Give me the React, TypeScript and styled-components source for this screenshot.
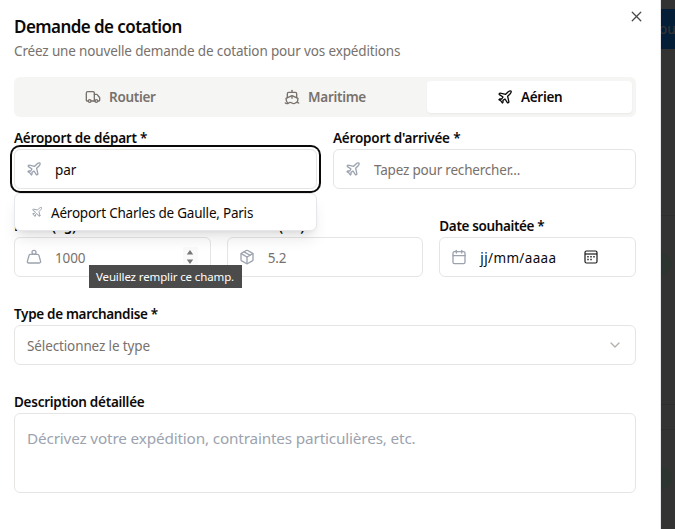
import React from 'react';
import styled, { createGlobalStyle } from 'styled-components';
import { Calendar, ChevronDown, Package, Plane, Ship, Truck, Weight, X } from 'lucide-react';

const GlobalStyle = createGlobalStyle`
  * { box-sizing: border-box; }
  body {
    margin: 0;
    overflow: hidden;
    font-family: "Noto Sans", "Open Sans", sans-serif;
    font-size: 13.5px;
    color: #0c0a09;
  }
`;

const Screen = styled.div`
  display: flex;
  width: 675px;
  height: 529px;
  overflow: hidden;
  background: #333333;
`;

const Dialog = styled.section`
  position: relative;
  flex: none;
  width: 661px;
  height: 529px;
  padding: 16px 24px 0 14px;
  background: #fff;
  border-right: 1px solid #e5e7eb;
`;

const Backdrop = styled.aside`
  position: relative;
  flex: 1;
  overflow: hidden;
`;

const DimButton = styled.div`
  position: absolute;
  top: 9px;
  left: -20px;
  width: 60px;
  height: 40px;
  padding-left: 18px;
  line-height: 41px;
  font-weight: 500;
  color: #333;
  background: #031e36;
`;

const DimPill = styled.div<{ $top: number; $width: number }>`
  position: absolute;
  top: ${p => p.$top}px;
  left: -20px;
  width: ${p => p.$width + 20}px;
  height: 22px;
  border-radius: 11px;
  background: #2c352f;
`;

const DimRule = styled.div<{ $top: number }>`
  position: absolute;
  top: ${p => p.$top}px;
  left: 0;
  right: 0;
  height: 1px;
  background: #2e2e2e;
`;

const CloseButton = styled.button`
  position: absolute;
  top: 8px;
  right: 15px;
  display: flex;
  padding: 0;
  border: 0;
  background: none;
  color: #4a4847;
`;

const Title = styled.h2`
  margin: 0;
  font-size: 17px;
  line-height: 22px;
  font-weight: 600;
  letter-spacing: -0.56px;
`;

const Subtitle = styled.p`
  margin: 3px 0 16px;
  line-height: 20px;
  letter-spacing: -0.15px;
  color: #78716c;
`;

const Tabs = styled.div`
  display: grid;
  grid-template-columns: repeat(3, 1fr);
  height: 40px;
  padding: 4px;
  margin-bottom: 10px;
  border-radius: 6px;
  background: #f5f5f4;
`;

const Tab = styled.button<{ $active?: boolean }>`
  display: flex;
  align-items: center;
  justify-content: center;
  gap: 8px;
  padding: 0;
  border: 0;
  border-radius: 4px;
  font: inherit;
  font-weight: 600;
  letter-spacing: -0.3px;
  color: ${p => (p.$active ? '#0c0a09' : '#78716c')};
  background: ${p => (p.$active ? '#fff' : 'transparent')};
  box-shadow: ${p => (p.$active ? '0 1px 2px rgba(0, 0, 0, 0.05)' : 'none')};
`;

const FormRow = styled.div<{ $columns: number }>`
  display: grid;
  grid-template-columns: repeat(${p => p.$columns}, 1fr);
  gap: 16px;
  margin-bottom: 26px;
`;

const Field = styled.div`
  position: relative;
  min-width: 0;
`;

const Label = styled.label<{ $track?: number }>`
  display: block;
  height: 22px;
  line-height: 22px;
  font-weight: 600;
  letter-spacing: ${p => p.$track ?? -0.2}px;
  white-space: nowrap;
`;

const Control = styled.div<{ $focused?: boolean }>`
  display: flex;
  align-items: center;
  height: 40px;
  padding: 0 12px;
  border: 1px solid #e7e5e4;
  border-radius: 6px;
  background: #fff;
  white-space: nowrap;
  box-shadow: ${p => (p.$focused ? '0 0 0 2px #fff, 0 0 0 4px #0c0a09' : 'none')};

  > svg:first-child { flex: none; margin-left: -1px; margin-right: 13px; color: #9ca3af; }
`;

const Value = styled.span<{ $muted?: boolean; $track?: number }>`
  flex: 1;
  padding-top: 1px;
  color: ${p => (p.$muted ? '#78716c' : '#0c0a09')};
  letter-spacing: ${p => p.$track ?? -0.12}px;
`;

const Area = styled.div`
  height: 80px;
  padding: 12px;
  border: 1px solid #e7e5e4;
  border-radius: 6px;
  font-size: 15.3px;
  line-height: 24px;
  letter-spacing: -0.16px;
  color: #9ca3af;
`;

const Suggestions = styled.div`
  position: absolute;
  z-index: 2;
  top: 66px;
  left: 0;
  right: 0;
  display: flex;
  align-items: center;
  gap: 8px;
  height: 38px;
  padding: 0 16px;
  border: 1px solid #e5e7eb;
  border-radius: 6px;
  background: #fff;
  box-shadow: 0 10px 15px -3px rgba(0, 0, 0, 0.1), 0 4px 6px -4px rgba(0, 0, 0, 0.1);

  svg { color: #9ca3af; }
`;

const Spinner = styled.span`
  display: flex;
  flex-direction: column;
  align-items: center;
  justify-content: center;
  width: 15px;
  height: 20px;
  background: #fafafa;
`;

const Tooltip = styled.div`
  position: absolute;
  z-index: 3;
  top: 50px;
  left: 75px;
  width: 153px;
  height: 23px;
  padding-left: 7px;
  line-height: 23px;
  font-size: 11.5px;
  letter-spacing: -0.13px;
  white-space: nowrap;
  color: #fff;
  background: #4b4b4b;
`;

const PickerIcon = styled.svg`
  margin-right: 25px;
`;

const DatePicker = () => (
  <PickerIcon width="14" height="14" viewBox="0 0 14 14" fill="none" stroke="#1a1a1a">
    <rect x="1" y="1" width="12" height="12" rx="1.5" strokeWidth="1.2" />
    <path d="M1 4h12" strokeWidth="1.2" />
    <path d="M6.3 6.7h1.4M9.3 6.7h1.4M3.3 9.5h1.4M6.3 9.5h1.4M3.3 6.7h1.4" strokeWidth="1.4" />
  </PickerIcon>
);

export default function App() {
  return (
    <>
      <GlobalStyle />
      <Screen>
        <Dialog>
          <CloseButton aria-label="Fermer"><X size={17} strokeWidth={1.8} /></CloseButton>
          <Title>Demande de cotation</Title>
          <Subtitle>Créez une nouvelle demande de cotation pour vos expéditions</Subtitle>
          <Tabs>
            <Tab><Truck size={16} />Routier</Tab>
            <Tab><Ship size={16} />Maritime</Tab>
            <Tab $active><Plane size={16} />Aérien</Tab>
          </Tabs>

          <FormRow $columns={2}>
            <Field>
              <Label>Aéroport de départ *</Label>
              <Control $focused><Plane size={16} /><Value>par</Value></Control>
              <Suggestions>
                <Plane size={12} />
                <Value $track={-0.22}>Aéroport Charles de Gaulle, Paris</Value>
              </Suggestions>
            </Field>
            <Field>
              <Label>Aéroport d'arrivée *</Label>
              <Control><Plane size={16} /><Value $muted $track={-0.2}>Tapez pour rechercher...</Value></Control>
            </Field>
          </FormRow>

          <FormRow $columns={3}>
            <Field>
              <Label>Poids (kg) *</Label>
              <Control>
                <Weight size={16} />
                <Value $muted>1000</Value>
                <Spinner>
                  <svg width="8" height="14" viewBox="0 0 8 14" fill="#777">
                    <path d="M4 0L7.2 4.6H.8ZM4 14L.8 9.4H7.2Z" />
                  </svg>
                </Spinner>
              </Control>
              <Tooltip>Veuillez remplir ce champ.</Tooltip>
            </Field>
            <Field>
              <Label>Volume (m³) *</Label>
              <Control><Package size={16} /><Value $muted>5.2</Value></Control>
            </Field>
            <Field>
              <Label $track={-0.36}>Date souhaitée *</Label>
              <Control><Calendar size={16} /><Value $track={0.36}>jj/mm/aaaa</Value><DatePicker /></Control>
            </Field>
          </FormRow>

          <FormRow $columns={1}>
            <Field>
              <Label $track={-0.32}>Type de marchandise *</Label>
              <Control>
                <Value $muted>Sélectionnez le type</Value>
                <ChevronDown size={16} color="#b3b0ad" />
              </Control>
            </Field>
          </FormRow>

          <Field>
            <Label $track={-0.27}>Description détaillée</Label>
            <Area>Décrivez votre expédition, contraintes particulières, etc.</Area>
          </Field>
        </Dialog>
        <Backdrop>
          <DimButton>ou</DimButton>
          <DimRule $top={215} />
          <DimPill $top={253} $width={10} />
          <DimRule $top={404} />
          <DimRule $top={429} />
          <DimPill $top={467} $width={11} />
        </Backdrop>
      </Screen>
    </>
  );
}
